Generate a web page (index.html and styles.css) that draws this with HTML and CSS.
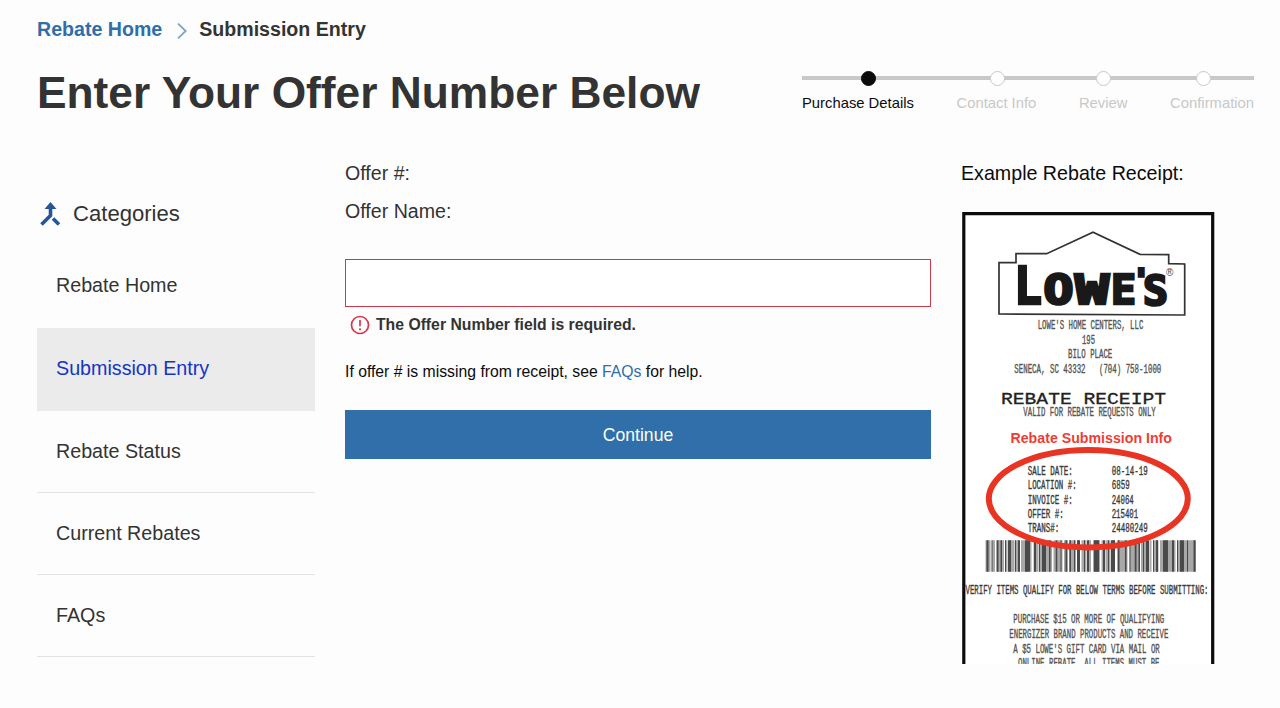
FILE: index.html
```html
<!DOCTYPE html>
<html lang="en">
<head>
  <meta charset="UTF-8" />
  <title>Submission Entry</title>
  <meta name="viewport" content="width=device-width, initial-scale=1" />
  <link rel="stylesheet" href="styles.css">
</head>
<body>
  <nav class="breadcrumb">
    <a href="#">Rebate Home</a>
    <svg class="chevron" viewBox="0 0 10 16" aria-hidden="true">
      <path d="M1 .7 8.7 8 1 15.3"></path>
    </svg>
    <span>Submission Entry</span>
  </nav>

  <header class="page-header">
    <h1>Enter Your Offer Number Below</h1>
    <ol class="steps">
      <li class="step active"><span class="dot"></span>Purchase Details</li>
      <li class="step"><span class="dot"></span>Contact Info</li>
      <li class="step"><span class="dot"></span>Review</li>
      <li class="step"><span class="dot"></span>Confirmation</li>
    </ol>
  </header>

  <main class="columns">
    <aside class="sidebar">
      <h2>
        <svg class="merge-icon" viewBox="0 0 20 24" aria-hidden="true">
          <path class="arrow" d="M10.500 0 16.500 7H4.500Z"></path>
          <path class="branch" d="M10.500 5V13.500L1.500 22.500M13 16.500 19 22.500"></path>
        </svg>
        Categories
      </h2>
      <ul class="menu">
        <li><a href="#">Rebate Home</a></li>
        <li class="current"><a href="#">Submission Entry</a></li>
        <li><a href="#">Rebate Status</a></li>
        <li><a href="#">Current Rebates</a></li>
        <li><a href="#">FAQs</a></li>
      </ul>
    </aside>

    <form class="offer-form">
      <p class="offer-line">Offer #:</p>
      <p class="offer-line">Offer Name:</p>
      <input type="text" class="offer-input" aria-label="Offer Number">
      <div class="error">
        <svg viewBox="0 0 20 20" aria-hidden="true">
          <circle cx="10" cy="10" r="8.5"></circle>
          <path d="M10 5v6.3M10 13.2v2"></path>
        </svg>
        The Offer Number field is required.
      </div>
      <p class="help">If offer # is missing from receipt, see <a href="#">FAQs</a> for help.</p>
      <button type="button" class="continue">Continue</button>
    </form>

    <section class="example">
      <h3>Example Rebate Receipt:</h3>
      <svg class="receipt" viewBox="0 0 255 453" role="img">
        <path class="frame" d="M3.8 453V2.7H252.7V453"></path>

        <!-- store logo -->
        <path class="house" d="M39 103V51.7H56V42.7H86.7L133 21.3 180 43.3 208.7 43.7V52.7L224.7 53V104Z"></path>
        <text class="logo" y="93.2"><tspan class="big" x="54" textLength="28" lengthAdjust="spacingAndGlyphs">L</tspan><tspan x="83.5" textLength="30" lengthAdjust="spacingAndGlyphs">O</tspan><tspan x="115" textLength="34" lengthAdjust="spacingAndGlyphs">W</tspan><tspan x="151" textLength="25" lengthAdjust="spacingAndGlyphs">E</tspan><tspan class="apos" x="174" y="76">'</tspan><tspan x="183" y="94.2" textLength="25" lengthAdjust="spacingAndGlyphs">S</tspan></text>
        <text class="reg" x="206" y="64.5">®</text>

        <g class="print">
          <text x="77.7" y="118.2" textLength="105.6" lengthAdjust="spacingAndGlyphs">LOWE'S HOME CENTERS, LLC</text>
          <text x="122" y="132.5" textLength="13" lengthAdjust="spacingAndGlyphs">195</text>
          <text x="108" y="147.4" textLength="44.3" lengthAdjust="spacingAndGlyphs">BILO PLACE</text>
          <text x="54.3" y="162" textLength="147" lengthAdjust="spacingAndGlyphs">SENECA, SC 43332&#160;&#160; (704) 758-1000</text>
          <text class="wide" x="41" y="193.2" textLength="165" lengthAdjust="spacingAndGlyphs">REBATE RECEIPT</text>
          <text x="63.3" y="205.4" textLength="132.5" lengthAdjust="spacingAndGlyphs">VALID FOR REBATE REQUESTS ONLY</text>
        </g>

        <text class="info-title" x="50.5" y="232.3" textLength="161.5" lengthAdjust="spacingAndGlyphs">Rebate Submission Info</text>

        <g class="print dark">
          <text x="67.7" y="264" textLength="45" lengthAdjust="spacingAndGlyphs">SALE DATE:</text>
          <text x="151.7" y="264" textLength="36" lengthAdjust="spacingAndGlyphs">08-14-19</text>
          <text x="67.7" y="278.4" textLength="49" lengthAdjust="spacingAndGlyphs">LOCATION #:</text>
          <text x="151.7" y="278.4" textLength="18" lengthAdjust="spacingAndGlyphs">6859</text>
          <text x="67.7" y="293" textLength="45" lengthAdjust="spacingAndGlyphs">INVOICE #:</text>
          <text x="151.7" y="293" textLength="22" lengthAdjust="spacingAndGlyphs">24064</text>
          <text x="67.7" y="307.4" textLength="36" lengthAdjust="spacingAndGlyphs">OFFER #:</text>
          <text x="151.7" y="307.4" textLength="26.5" lengthAdjust="spacingAndGlyphs">215401</text>
          <text x="67.7" y="321.2" textLength="31.5" lengthAdjust="spacingAndGlyphs">TRANS#:</text>
          <text x="151.7" y="321.2" textLength="36" lengthAdjust="spacingAndGlyphs">24480249</text>
        </g>

        <path class="bars light" d="M25.5 345H237.5"></path>
        <path class="bars" d="M26.5 345H237.5"></path>
        <ellipse class="marker" cx="128.3" cy="287.7" rx="99.5" ry="48.7"></ellipse>

        <g class="print dark">
          <text x="5.5" y="382.7" textLength="243" lengthAdjust="spacingAndGlyphs">VERIFY ITEMS QUALIFY FOR BELOW TERMS BEFORE SUBMITTING:</text>
        </g>
        <g class="print">
          <text x="53.3" y="412.3" textLength="151" lengthAdjust="spacingAndGlyphs">PURCHASE $15 OR MORE OF QUALIFYING</text>
          <text x="49.3" y="427" textLength="159" lengthAdjust="spacingAndGlyphs">ENERGIZER BRAND PRODUCTS AND RECEIVE</text>
          <text x="53.3" y="441.5" textLength="146.5" lengthAdjust="spacingAndGlyphs">A $5 LOWE'S GIFT CARD VIA MAIL OR</text>
          <text x="58" y="456" textLength="141.5" lengthAdjust="spacingAndGlyphs">ONLINE REBATE. ALL ITEMS MUST BE</text>
        </g>
      </svg>
    </section>
  </main>
</body>
</html>
```
FILE: styles.css
```css
* { box-sizing: border-box; }
body {
  margin: 0;
  padding: 16px 26px 0 37px;
  height: 708px;
  overflow: hidden;
  background: #fdfdfd;
  color: #333;
  font-family: "Liberation Sans", Arial, sans-serif;
}
h1, h2, h3, p, ul, ol { margin: 0; padding: 0; }
ul, ol { list-style: none; }
a { color: #2f6eaa; text-decoration: none; }

.breadcrumb {
  display: flex;
  align-items: center;
  height: 26px;
  font-size: 19.6px;
  font-weight: 700;
}
.chevron {
  width: 10px;
  height: 16px;
  margin: 4px 12px 0 15px;
  fill: none;
  stroke: #7ba3cd;
  stroke-width: 1.8;
}

.page-header {
  display: flex;
  justify-content: space-between;
  height: 102px;
}
h1 {
  padding-top: 25px;
  font-size: 44.3px;
  line-height: 52px;
  white-space: nowrap;
}

.steps {
  display: flex;
  justify-content: space-between;
  width: 452px;
  height: 44px;
  margin-top: 29px;
  background: linear-gradient(#c8c8c8, #c8c8c8) 0 5px / 100% 4px no-repeat;
}
.step {
  display: flex;
  flex-direction: column;
  align-items: center;
  gap: 8px;
  font-size: 14.8px;
  line-height: 18px;
  color: #c8c8c8;
}
.step.active { color: #0b0b0b; }
.dot {
  width: 15px;
  height: 15px;
  border: 1px solid #c8c8c8;
  border-radius: 50%;
  background: #fff;
}
.active .dot {
  margin-left: 21px;
  border-color: #0b0b0b;
  background: #0b0b0b;
}
.step:nth-child(2) .dot { margin-left: 2px; }
.step:last-child .dot { margin-right: 17px; }

.columns {
  display: grid;
  grid-template-columns: 278px 586px 255px;
  column-gap: 30px;
  padding-top: 16px;
}

.sidebar { padding-top: 41px; }
.sidebar h2 {
  display: flex;
  align-items: center;
  height: 26px;
  font-size: 22.1px;
  font-weight: 400;
}
.merge-icon {
  width: 20px;
  height: 24px;
  margin: 0 13px 0 3px;
}
.merge-icon .arrow { fill: #255798; }
.merge-icon .branch {
  fill: none;
  stroke: #255798;
  stroke-width: 3.6;
}
.menu { padding-top: 18px; }
.menu li {
  display: flex;
  align-items: center;
  height: 82px;
  padding: 0 0 1px 19px;
  border-bottom: 1px solid #e3e3e3;
  font-size: 19.7px;
}
.menu li:first-child, .menu .current {
  height: 83px;
  padding-bottom: 2px;
  border-bottom: 0;
}
.menu a { color: #333; }
.menu .current { background: #ebebeb; }
.menu .current a { color: #1535c4; }

.offer-line {
  height: 38px;
  font-size: 19.6px;
  line-height: 26px;
}
.offer-input {
  display: block;
  width: 100%;
  height: 48px;
  margin-top: 23px;
  padding: 0 12px;
  border: 1px solid #cb3a4a;
  border-radius: 0;
  background: #fff;
  font-size: 19.6px;
}
.error {
  display: flex;
  align-items: center;
  gap: 6px;
  height: 20px;
  margin: 8px 0 0 5px;
  font-size: 15.75px;
  font-weight: 700;
}
.error svg {
  width: 20px;
  height: 20px;
  fill: none;
  stroke: #d4374b;
  stroke-width: 1.7;
}
.help {
  margin-top: 27px;
  color: #0b0b0b;
  font-size: 15.75px;
  line-height: 20px;
}
.continue {
  display: block;
  width: 100%;
  height: 49px;
  margin-top: 28px;
  padding: 1px 0 0;
  border: 0;
  background: #306fa9;
  color: #fff;
  font-family: inherit;
  font-size: 17.6px;
}

.example {
  /* receipt frame is inset inside its own box */
  margin-left: -1px;
}
.example h3 {
  height: 51px;
  padding-left: 1px;
  color: #0b0b0b;
  font-size: 19.65px;
  font-weight: 400;
  line-height: 26px;
  white-space: nowrap;
}

/* receipt */
.receipt {
  display: block;
  width: 255px;
  height: 453px;
}
.frame {
  fill: #fff;
  stroke: #0c0c0c;
  stroke-width: 3.2;
}
.house {
  fill: none;
  stroke: #333;
  stroke-width: 1.7;
}
.logo {
  fill: #191919;
  stroke: #191919;
  stroke-width: 2.6;
  font: 700 40px "DejaVu Sans Mono", monospace;
}
.logo .big { font-size: 51px; }
.logo .apos { font-size: 24px; stroke-width: 4; }
.reg {
  fill: #444;
  font: 10px "Liberation Sans", sans-serif;
}
.print {
  fill: #555;
  stroke: #555;
  stroke-width: .35;
  font: 12px "Liberation Mono", monospace;
}
.print.dark { fill: #3a3a3a; stroke: #3a3a3a; }
.wide {
  fill: #222;
  stroke: #222;
  stroke-width: .3;
  font-size: 16px;
}
.info-title {
  fill: #ee3d35;
  font: 700 14.5px "Liberation Sans", Arial, sans-serif;
}
.marker {
  fill: none;
  stroke: #e93323;
  stroke-width: 6;
}
.bars {
  fill: none;
  stroke: #4a4a4a;
  stroke-width: 31.5;
  stroke-dasharray: 2 3 1 4 2 2 1.5 3 1 2 3 4 1 2 2 5 5 4 2 3 1 2 4 3 1.5 5;
}
.bars.light {
  stroke: #a8a8a8;
  stroke-dasharray: 5 1.5 3 2 7 1.5 2 2;
}
```
